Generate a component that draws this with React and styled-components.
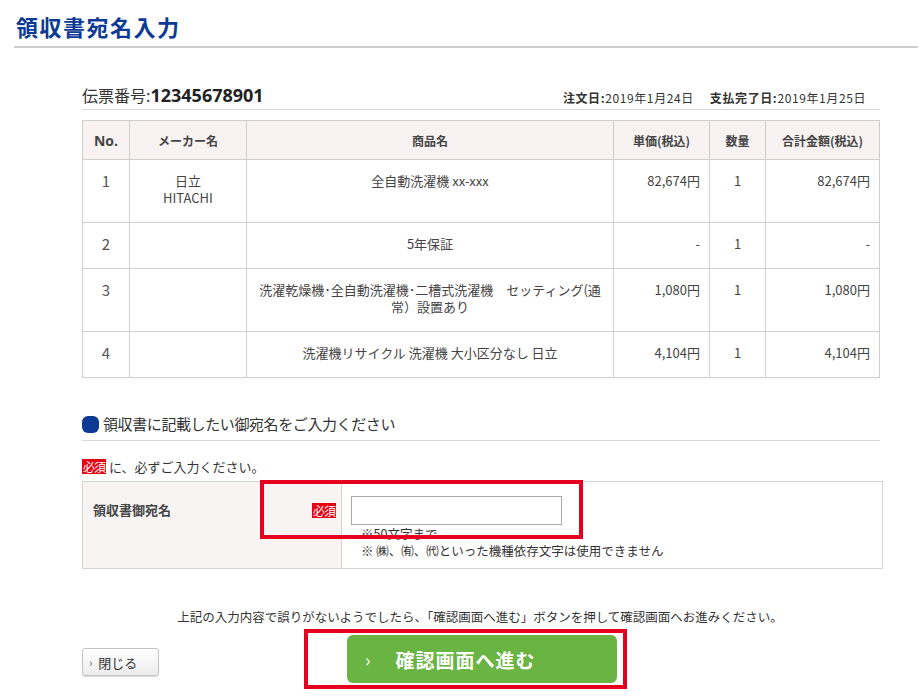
import React from 'react'
import styled, { createGlobalStyle } from 'styled-components'

const GlobalStyle = createGlobalStyle`
  body {
    margin: 0;
    background: #fff;
    font-family: "Noto Sans CJK JP", "Liberation Sans", sans-serif;
    color: #333;
  }
`

const items = [
  { no: 1, maker: ['日立', 'HITACHI'], name: ['全自動洗濯機 xx-xxx'], price: '82,674円', qty: 1, total: '82,674円' },
  { no: 2, maker: [], name: ['5年保証'], price: '-', qty: 1, total: '-' },
  { no: 3, maker: [], name: ['洗濯乾燥機･全自動洗濯機･二槽式洗濯機　セッティング(通', '常）設置あり'], price: '1,080円', qty: 1, total: '1,080円' },
  { no: 4, maker: [], name: ['洗濯機リサイクル 洗濯機 大小区分なし 日立'], price: '4,104円', qty: 1, total: '4,104円' },
]

function App() {
  return (
    <Page>
      <GlobalStyle />
      <Header>
        <Title>領収書宛名入力</Title>
      </Header>
      <Content>
        <SlipRow>
          <Slip>
            伝票番号:<SlipNo>12345678901</SlipNo>
          </Slip>
          <Dates>
            <b>注文日:</b>2019年1月24日
            <Gap />
            <b>支払完了日:</b>2019年1月25日
          </Dates>
        </SlipRow>

        <Table>
          <colgroup>
            <col style={{ width: 47 }} />
            <col style={{ width: 117 }} />
            <col style={{ width: 367 }} />
            <col style={{ width: 96 }} />
            <col style={{ width: 56 }} />
            <col style={{ width: 114 }} />
          </colgroup>
          <thead>
            <tr>
              <Th $big>No.</Th>
              <Th>メーカー名</Th>
              <Th>商品名</Th>
              <Th>単価(税込)</Th>
              <Th>数量</Th>
              <Th>合計金額(税込)</Th>
            </tr>
          </thead>
          <tbody>
            {items.map(it => (
              <tr key={it.no}>
                <Td $align="center" $big>{it.no}</Td>
                <Td $align="center">
                  {it.maker.map(m => <Line key={m}>{m}</Line>)}
                </Td>
                <Td $align="center">
                  {it.name.map(n => <Line key={n}>{n}</Line>)}
                </Td>
                <Td $align="right">{it.price}</Td>
                <Td $align="center">{it.qty}</Td>
                <Td $align="right">{it.total}</Td>
              </tr>
            ))}
          </tbody>
        </Table>

        <SectionTitle>
          <Dot />
          領収書に記載したい御宛名をご入力ください
        </SectionTitle>

        <Note>
          <Badge>必須</Badge> に、必ずご入力ください。
        </Note>

        <FormBox>
          <FormLabel>
            <span>領収書御宛名</span>
            <Badge>必須</Badge>
          </FormLabel>
          <FormField>
            <Input type="text" />
            <Hint>※50文字まで</Hint>
            <Hint>※ ㈱、㈲、㈹といった機種依存文字は使用できません</Hint>
          </FormField>
          <Highlight style={{ left: 177, top: -2, width: 323, height: 59 }} />
        </FormBox>

        <Notice>
          上記の入力内容で誤りがないようでしたら、「確認画面へ進む」ボタンを押して確認画面へお進みください。
        </Notice>

        <ButtonRow>
          <CloseButton>
            <Chevron>›</Chevron>閉じる
          </CloseButton>
          <SubmitButton>
            <BigChevron>›</BigChevron>確認画面へ進む
          </SubmitButton>
          <Highlight style={{ left: 222, top: -6, width: 323, height: 60 }} />
        </ButtonRow>
      </Content>
    </Page>
  )
}

export default App

const Page = styled.div`
  width: 920px;
  min-height: 700px;
`

const Header = styled.div`
  padding: 11px 2px 0 14px;
`

const Title = styled.h1`
  margin: 0;
  padding: 0 0 4px 2px;
  font-size: 22px;
  line-height: 31px;
  font-weight: bold;
  color: #0d3a94;
  letter-spacing: 1.5px;
  border-bottom: 2px solid #cfcfcf;
`

const Content = styled.div`
  margin: 0 40px 0 82px;
`

const SlipRow = styled.div`
  display: flex;
  align-items: flex-end;
  justify-content: space-between;
  margin-top: 36px;
  padding-bottom: 3px;
  border-bottom: 1px solid #d8d8d8;
`

const Slip = styled.div`
  font-size: 16px;
  line-height: 22px;
  color: #333;
`

const SlipNo = styled.span`
  font-family: "Open Sans", "Liberation Sans", sans-serif;
  font-size: 18px;
  font-weight: bold;
  color: #222;
`

const Dates = styled.div`
  font-size: 12px;
  line-height: 16px;
  letter-spacing: 0.6px;
  color: #333;
  padding-right: 14px;
  b { font-weight: bold; }
`

const Gap = styled.span`
  display: inline-block;
  width: 16px;
`

const Table = styled.table`
  width: 798px;
  margin-top: 10px;
  border-collapse: collapse;
  table-layout: fixed;
  font-size: 13px;
`

const Th = styled.th`
  height: 38px;
  padding: 0 6px;
  background: #f8f2f2;
  border: 1px solid #cfcfcf;
  font-size: ${p => (p.$big ? '14px' : '12px')};
  font-weight: bold;
  color: #444;
  text-align: center;
  vertical-align: middle;
  font-family: ${p => (p.$big ? '"Open Sans", "Liberation Sans", sans-serif' : 'inherit')};
`

const Td = styled.td`
  padding: 12px 9px 16px;
  border: 1px solid #cfcfcf;
  text-align: ${p => p.$align};
  vertical-align: top;
  font-size: ${p => (p.$big ? '15px' : '13px')};
  line-height: 17px;
  color: ${p => (p.$big ? '#555' : '#444')};
  height: 17px;
`

const Line = styled.div`
  white-space: nowrap;
`

const SectionTitle = styled.h2`
  display: flex;
  align-items: center;
  gap: 4px;
  margin: 35px 0 0;
  padding-bottom: 5px;
  border-bottom: 1px solid #d8d8d8;
  font-size: 15px;
  line-height: 22px;
  letter-spacing: -0.4px;
  font-weight: normal;
  color: #333;
`

const Dot = styled.span`
  width: 17px;
  height: 17px;
  border-radius: 6px;
  background: #0d3a94;
`

const Note = styled.div`
  margin-top: 17px;
  font-size: 13px;
  line-height: 18px;
  color: #333;
`

const Badge = styled.span`
  display: inline-block;
  padding: 0 1px;
  background: #e60012;
  color: #fff;
  font-size: 12px;
  line-height: 15px;
  letter-spacing: -1px;
`

const FormBox = styled.div`
  position: relative;
  display: flex;
  margin-top: 5px;
  width: 799px;
  border: 1px solid #d4d4d4;
`

const FormLabel = styled.div`
  width: 243px;
  display: flex;
  justify-content: space-between;
  align-items: flex-start;
  padding: 20px 5px 0 10px;
  background: #f8f4f4;
  border-right: 1px solid #d4d4d4;
  font-size: 13px;
  line-height: 16px;
  font-weight: bold;
  color: #444;
  ${Badge} {
    margin-top: 1px;
    font-weight: normal;
  }
`

const FormField = styled.div`
  flex: 1;
  padding: 14px 10px 9px 9px;
`

const Input = styled.input`
  box-sizing: border-box;
  display: block;
  width: 211px;
  height: 29px;
  border: 1px solid #a9a9a9;
  outline: none;
`

const Hint = styled.div`
  padding-left: 10px;
  font-size: 12.5px;
  line-height: 17px;
  color: #333;
`

const Highlight = styled.div`
  position: absolute;
  box-sizing: border-box;
  border: 4px solid #e60020;
  pointer-events: none;
`

const Notice = styled.p`
  margin: 39px 0 0;
  padding-right: 2px;
  text-align: center;
  font-size: 12.5px;
  line-height: 18px;
  color: #333;
`

const ButtonRow = styled.div`
  position: relative;
  display: flex;
  align-items: center;
  margin-top: 9px;
  height: 48px;
`

const CloseButton = styled.button`
  box-sizing: border-box;
  width: 77px;
  height: 28px;
  margin-top: 6px;
  padding: 0 6px;
  display: flex;
  align-items: center;
  gap: 6px;
  border: 1px solid #c4c4c4;
  border-radius: 3px;
  background: linear-gradient(#fff, #ececec);
  box-shadow: 0 1px 1px rgba(0, 0, 0, 0.15);
  font-family: inherit;
  font-size: 13px;
  color: #333;
`

const Chevron = styled.span`
  font-size: 11px;
  color: #555;
`

const SubmitButton = styled.button`
  box-sizing: border-box;
  width: 270px;
  height: 48px;
  margin-left: 188px;
  display: flex;
  align-items: center;
  padding-left: 18px;
  border: none;
  border-radius: 6px;
  background: #6ab443;
  color: #fff;
  font-family: inherit;
  font-size: 19px;
  font-weight: bold;
  letter-spacing: 1px;
`

const BigChevron = styled.span`
  font-size: 18px;
  font-weight: normal;
  margin-right: 24px;
`
